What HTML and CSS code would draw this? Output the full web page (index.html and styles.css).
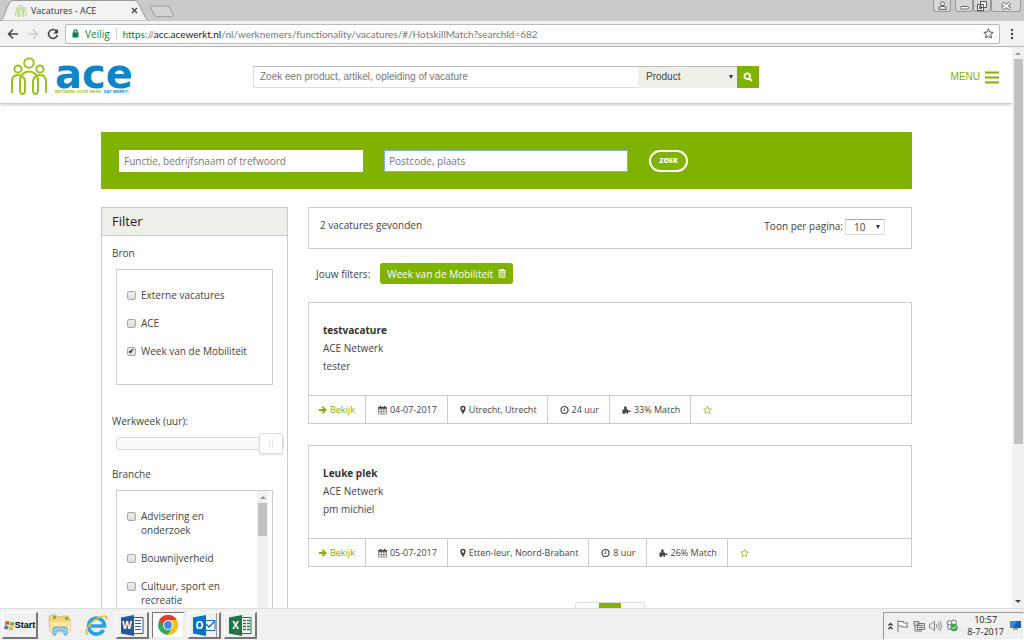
FILE: index.html
```html
<!DOCTYPE html>
<html lang="nl">
<head>
<meta charset="utf-8">
<title>Vacatures - ACE</title>
<link rel="stylesheet" href="styles.css">
</head>
<body>
<svg class="defs" aria-hidden="true">
  <symbol id="people" viewBox="0 0 38 38">
    <g fill="none" stroke="currentColor" stroke-width="2">
      <circle cx="19" cy="6" r="4.800"/><circle cx="8" cy="12" r="3.600"/><circle cx="30" cy="12" r="3.600"/>
      <path d="M2 36V25Q2 18 8 18Q14 18 15 24V33Q15 37 12.500 37T10 33V24C10 18 14 14.500 19 14.500S28 18 28 24V33Q28 37 25.500 37T23 33V24Q24 18 30 18Q36 18 36 25V36"/>
    </g>
  </symbol>
  <symbol id="star" viewBox="0 0 12 12"><path d="M6 1l1.500 3.400 3.600.4-2.700 2.400.8 3.600L6 9l-3.200 1.800.8-3.600L.9 4.800l3.600-.4z" fill="none" stroke="currentColor"/></symbol>
  <symbol id="arrow" viewBox="0 0 10 10"><path d="M1 5h7M5 1.500L8.500 5 5 8.500" fill="none" stroke="currentColor" stroke-width="2"/></symbol>
  <symbol id="calendar" viewBox="0 0 10 10"><path d="M.5 2h9v7.500h-9zM.5 4h9M3.500 4v5.500M6.500 4v5.500M.5 6.700h9" fill="none" stroke="currentColor" stroke-width=".6"/><path d="M.3 1.700h9.400v2H.3zM2 .3h1.500v2H2zM6.500.3H8v2H6.500z" fill="currentColor"/></symbol>
  <symbol id="pin" viewBox="0 0 6 10"><path fill-rule="evenodd" d="M3 .8A2.700 2.700 0 0 0 .3 3.500C.3 5 2 7 3 9.600 4 7 5.700 5 5.700 3.500A2.700 2.700 0 0 0 3 .8zm0 1.500a1.200 1.200 0 1 1 0 2.400 1.200 1.200 0 0 1 0-2.400z" fill="currentColor"/></symbol>
  <symbol id="clock" viewBox="0 0 10 10"><g fill="none" stroke="currentColor"><circle cx="5" cy="5" r="3.900" stroke-width="1.300"/><path d="M5.300 2.500v3H3.500" stroke-width=".9"/></g></symbol>
  <symbol id="puzzle" viewBox="0 0 10 10"><path d="M.5 4.500h2.200C2 2.500 2.300 1 3.700.8c1.600 0 1.800 1.700 1.300 3.700h1.700v1.300c1-.6 3-.5 3 .6s-2 1.200-3 .6v2.300H5c.3-2-1.800-2-1.500 0h-3z" fill="currentColor"/></symbol>
</svg>

<div class="tabs">
  <div class="tab">
    <svg class="tab-shape" viewBox="0 0 152 21" preserveAspectRatio="none"><path d="M0 21C5 20 7 1 13 .5h124c4 0 9 19 14 20.500z" fill="#f2f2f2" stroke="#999"/></svg>
    <svg class="favicon"><use href="#people"/></svg>
    <span class="tab-title">Vacatures - ACE</span>
    <button class="plain" aria-label="Tab sluiten"><svg width="7" height="7" viewBox="0 0 7 7"><path d="M1 1l5 5M6 1L1 6" stroke="#444" stroke-width="1.300"/></svg></button>
  </div>
  <button class="plain newtab" aria-label="Nieuw tabblad"><svg width="26" height="13" viewBox="0 0 26 13"><path d="M2 .5h17q2 0 3 3l3 7q0 1.500-2 1.500H7q-2 0-3-3L1 3Q0 .5 2 .5z" fill="#d3d3d3" stroke="#999"/></svg></button>
  <div class="wincontrols">
    <button aria-label="Profiel"><svg width="9" height="9" viewBox="0 0 9 9"><circle cx="4.500" cy="2.700" r="1.900" fill="#fff" stroke="#555"/><path d="M1 8.300V7q0-1.500 2-1.500h3q2 0 2 1.500v1.300z" fill="#fff" stroke="#555"/></svg></button>
    <div class="wingroup">
      <button aria-label="Minimaliseren"><svg width="9" height="9" viewBox="0 0 9 9"><rect x=".5" y="5.500" width="8" height="2.500" rx="1" fill="#fff" stroke="#666"/></svg></button>
      <button aria-label="Herstellen"><svg width="10" height="10" viewBox="0 0 10 10"><path d="M3.500.5h6v6h-6zM.5 3.500h6v6h-6z" fill="#fff" stroke="#555"/><path d="M2.500 5.500h2v2h-2z" fill="none" stroke="#555"/></svg></button>
      <button class="wide" aria-label="Sluiten"><svg width="10" height="8" viewBox="0 0 10 8"><path d="M1 1l8 6M9 1L1 7" stroke="#777" stroke-width="3.500"/><path d="M1.500 1.400l7 5.200M8.500 1.400l-7 5.200" stroke="#fff" stroke-width="1.800"/></svg></button>
    </div>
  </div>
</div>

<div class="toolbar">
  <button class="plain" aria-label="Terug"><svg width="12" height="12" viewBox="0 0 12 12"><path d="M11 6H1.500M6 1.500L1.500 6 6 10.500" fill="none" stroke="#444" stroke-width="1.500"/></svg></button>
  <button class="plain" aria-label="Vooruit"><svg width="12" height="12" viewBox="0 0 12 12"><path d="M1 6h9.500M6 1.500L10.500 6 6 10.500" fill="none" stroke="#ccc" stroke-width="1.300"/></svg></button>
  <button class="plain" aria-label="Vernieuwen"><svg width="12" height="12" viewBox="0 0 12 12"><path d="M9.800 3.500A4.500 4.500 0 1 0 10.400 7" fill="none" stroke="#444" stroke-width="1.500"/><path d="M11 .8v4.700H6.300z" fill="#444"/></svg></button>
  <div class="address">
    <svg width="7" height="9" viewBox="0 0 7 9"><path d="M.5 3.500h6v5h-6z" fill="#0b8043"/><path d="M2 4V2.300a1.500 1.500 0 0 1 3 0V4" fill="none" stroke="#0b8043" stroke-width="1.200"/></svg>
    <span class="secure">Veilig</span>
    <span class="url"><span class="secure">https</span>://<b>acc.acewerkt.nl</b>/nl/werknemers/functionality/vacatures/#/HotskillMatch?searchId=682</span>
    <svg class="bookmark"><use href="#star"/></svg>
  </div>
  <button class="plain" aria-label="Menu van browser"><svg width="4" height="12" viewBox="0 0 4 12"><g fill="#444"><circle cx="2" cy="2" r="1.200"/><circle cx="2" cy="6" r="1.200"/><circle cx="2" cy="10" r="1.200"/></g></svg></button>
</div>

<div class="viewport">
  <div class="page">
    <header class="site-header">
      <a class="logo" href="#">
        <svg class="logo-people"><use href="#people"/></svg>
        <span class="logo-words"><span class="logo-name">ace</span><span class="logo-line">NETWERK VOOR WERK, <em>DAT WERKT!</em></span></span>
      </a>
      <form class="site-search">
        <input type="text" aria-label="Zoeken" placeholder="Zoek een product, artikel, opleiding of vacature">
        <span class="select category"><select aria-label="Categorie"><option>Product</option></select></span>
        <button type="button" aria-label="Zoek"><svg width="10" height="10" viewBox="0 0 10 10"><circle cx="4.200" cy="4.200" r="2.800" fill="none" stroke="#fff" stroke-width="1.800"/><path d="M6.200 6.200L9 9" stroke="#fff" stroke-width="2"/></svg></button>
      </form>
      <a class="menu" href="#">MENU <svg width="14" height="13" viewBox="0 0 14 13"><path d="M0 1.500h14M0 6.500h14M0 11.500h14" stroke="#80b200" stroke-width="2"/></svg></a>
    </header>

    <main class="content">
      <form class="finder">
        <input type="text" aria-label="Functie" placeholder="Functie, bedrijfsnaam of trefwoord">
        <input class="focused" type="text" aria-label="Plaats" placeholder="Postcode, plaats">
        <button type="button">ZOEK</button>
      </form>

      <div class="columns">
        <aside class="filter">
          <h2>Filter</h2>
          <div class="filter-body">
            <h3>Bron</h3>
            <div class="box source">
              <label><input type="checkbox">Externe vacatures</label>
              <label><input type="checkbox">ACE</label>
              <label><input type="checkbox" checked>Week van de Mobiliteit</label>
            </div>
            <h3><label for="hours">Werkweek (uur):</label></h3>
            <input class="hours" id="hours" type="range" value="100">
            <h3>Branche</h3>
            <div class="box branch">
              <div class="branch-list">
                <label><input type="checkbox"><span>Advisering en onderzoek</span></label>
                <label><input type="checkbox">Bouwnijverheid</label>
                <label><input type="checkbox"><span>Cultuur, sport en recreatie</span></label>
              </div>
              <div class="scroll small"><span class="up"></span><span class="thumb"></span></div>
            </div>
          </div>
        </aside>

        <section class="results">
          <div class="summary">
            <span>2 vacatures gevonden</span>
            <label class="per-page">Toon per pagina: <span class="select count"><select><option>10</option></select></span></label>
          </div>
          <div class="active-filters">
            <span>Jouw filters:</span>
            <button type="button">Week van de Mobiliteit <svg width="8" height="9" viewBox="0 0 8 9"><path d="M0 1.500h8M2.500 1.300V.5h3v.8M1.200 2.500v5.800h5.600V2.500M3 3.500v4M5 3.500v4M1 3h6" fill="none" stroke="#fff" stroke-width=".9"/></svg></button>
          </div>

          <article class="card">
            <div class="card-body"><h4>testvacature</h4><p>ACE Netwerk</p><p>tester</p></div>
            <div class="card-foot">
              <a class="view" href="#"><svg class="i"><use href="#arrow"/></svg>Bekijk</a>
              <span><svg class="i"><use href="#calendar"/></svg>04-07-2017</span>
              <span><svg class="i narrow"><use href="#pin"/></svg>Utrecht, Utrecht</span>
              <span><svg class="i"><use href="#clock"/></svg>24 uur</span>
              <span><svg class="i"><use href="#puzzle"/></svg>33% Match</span>
              <a class="fav" href="#" aria-label="Bewaren"><svg class="i"><use href="#star"/></svg></a>
            </div>
          </article>

          <article class="card">
            <div class="card-body"><h4>Leuke plek</h4><p>ACE Netwerk</p><p>pm michiel</p></div>
            <div class="card-foot">
              <a class="view" href="#"><svg class="i"><use href="#arrow"/></svg>Bekijk</a>
              <span><svg class="i"><use href="#calendar"/></svg>05-07-2017</span>
              <span><svg class="i narrow"><use href="#pin"/></svg>Etten-leur, Noord-Brabant</span>
              <span><svg class="i"><use href="#clock"/></svg>8 uur</span>
              <span><svg class="i"><use href="#puzzle"/></svg>26% Match</span>
              <a class="fav" href="#" aria-label="Bewaren"><svg class="i"><use href="#star"/></svg></a>
            </div>
          </article>

          <nav class="pager"><span></span><span class="current"></span><span></span></nav>
        </section>
      </div>
    </main>
  </div>
  <div class="scroll"><span class="up"></span><span class="thumb"></span><span class="down"></span></div>
</div>

<footer class="taskbar">
  <button class="task start"><svg width="11" height="11" viewBox="0 0 11 11"><path d="M1.500 1.500Q3.500.5 5.500 1.500L4.700 5Q3 4 .8 5z" fill="#e8542a"/><path d="M6.200 1.800q2 1 4.300 0L9.800 5.300q-2 1-4.200 0z" fill="#7db832"/><path d="M.6 5.800Q2.600 5 4.500 6L3.700 9.500Q2 8.500 0 9.300z" fill="#3b82d0"/><path d="M5.300 6.300q2 1 4.300 0l-.8 3.500q-2 1-4.200 0z" fill="#f5b921"/></svg><span>Start</span></button>
  <button class="task flat" aria-label="Verkenner"><svg width="24" height="22" viewBox="0 0 24 22"><path d="M1 3l2-2h5l1 2h5l1-1h5l2 3v13H2z" fill="#f3d67a" stroke="#cda64a" stroke-width=".7"/><path d="M5 2h3v3H5zM17 3h3v3h-3z" fill="#77b255"/><path d="M2 8h20v10H2z" fill="#fae6a0"/><path d="M5 21v-6q0-2 2-2h10q2 0 2 2v6h-3v-4H8v4z" fill="#8fd0f0" stroke="#4a9ccc" stroke-width=".8"/></svg></button>
  <button class="task flat" aria-label="Internet Explorer"><svg width="23" height="23" viewBox="0 0 23 23"><path d="M18.500 16A8 8 0 1 1 19.500 12H6" fill="none" stroke="#2aa4e0" stroke-width="3.600"/><path d="M3 21C-2 18 5 8 12 4.500 18 1 23 1 21.500 6" fill="none" stroke="#edb52a" stroke-width="1.600"/></svg></button>
  <button class="task" aria-label="Word"><svg width="23" height="21" viewBox="0 0 23 21"><path d="M11 2.500h11v16H11z" fill="#fff" stroke="#2b579a"/><path d="M14 5.500h6M14 8.500h6M14 11.500h6M14 14.500h6" stroke="#2b579a"/><path d="M0 2.500L13 0v21L0 18.500z" fill="#2b579a"/><text x="6" y="14" text-anchor="middle" class="app">W</text></svg></button>
  <button class="task active" aria-label="Chrome"><svg width="22" height="22" viewBox="0 0 22 22"><circle cx="11" cy="11" r="10" fill="#34a853"/><path d="M11 11L2.300 6a10 10 0 0 1 17.400 0z" fill="#e33b2e"/><path d="M11 11V6h8.700A10 10 0 0 1 10.500 21l4.800-7.500z" fill="#fbc116"/><path d="M2.300 6L7 14l4-8z" fill="#e33b2e"/><circle cx="11" cy="11" r="5" fill="#fff"/><circle cx="11" cy="11" r="3.900" fill="#4285f4"/></svg></button>
  <button class="task double" aria-label="Outlook"><svg width="23" height="21" viewBox="0 0 23 21"><path d="M11 5.500h11v10H11z" fill="#fff" stroke="#0072c6"/><path d="M13 9l3 3 6-6" fill="none" stroke="#0072c6" stroke-width="1.500"/><path d="M0 2.500L13 0v21L0 18.500z" fill="#0072c6"/><text x="6.500" y="14" text-anchor="middle" class="app">O</text></svg></button>
  <button class="task" aria-label="Excel"><svg width="23" height="21" viewBox="0 0 23 21"><path d="M11 2.500h11v16H11z" fill="#fff" stroke="#217346"/><path d="M14 5.500h3M18 5.500h3M14 8.500h3M18 8.500h3M14 11.500h3M18 11.500h3M14 14.500h3M18 14.500h3" stroke="#217346" stroke-width="1.500"/><path d="M0 2.500L13 0v21L0 18.500z" fill="#217346"/><text x="6.500" y="14" text-anchor="middle" class="app">X</text></svg></button>
  <div class="tray">
    <svg width="5" height="8" viewBox="0 0 5 8"><path d="M.5 3.500l2-2 2 2M.5 7l2-2 2 2" fill="none" stroke="#222" stroke-width="1.200"/></svg>
    <svg width="12" height="12" viewBox="0 0 12 12"><path d="M1 0v12M1.500 1.500h5v1.500H11L9.500 5 11 7H5V6H1.500" fill="#fff" stroke="#777"/></svg>
    <svg width="12" height="12" viewBox="0 0 12 12"><path d="M1 1.500h5v4H1zM4.500 3.500h7v6h-7zM2 6v5h7" fill="#ddd" stroke="#777"/><path d="M6 5.500h4M6 7.500h4" stroke="#777"/></svg>
    <svg width="13" height="12" viewBox="0 0 13 12"><path d="M.5 4h2l3-3v10l-3-3h-2zM7 4q1.500 2 0 4M9 2.500q2.500 3.500 0 7M11 1q3 5 0 10" fill="none" stroke="#888"/></svg>
    <svg width="12" height="13" viewBox="0 0 12 13"><circle cx="3.500" cy="4" r="2.500" fill="#eee" stroke="#777"/><circle cx="8" cy="3.500" r="2.500" fill="#eee" stroke="#777"/><circle cx="4" cy="8" r="2.500" fill="#eee" stroke="#777"/><circle cx="8" cy="8.500" r="3.700" fill="#3fa650"/><path d="M6 8.500l1.500 1.500 2.500-3" fill="none" stroke="#fff"/></svg>
    <time>10:57<br>8-7-2017</time>
    <svg width="11" height="9" viewBox="0 0 11 9"><path d="M0 0h11v7H0z" fill="#1c5fb0"/><path d="M0 0h7L3 7H0z" fill="#3a86d8"/><path d="M3 8h5" stroke="#555"/></svg>
  </div>
</footer>
</body>
</html>
```
FILE: styles.css
```css
* { box-sizing: border-box; }
body {
  margin: 0;
  height: 100vh;
  display: flex;
  flex-direction: column;
  overflow: hidden;
  background: #fff;
  color: #444;
  font: 10px/14px "Open Sans", "Noto Sans", sans-serif;
}
button, input, select { font: inherit; color: inherit; margin: 0; padding: 0; border-radius: 0; }
a { color: #80b200; text-decoration: none; }
h2, h3, h4, p { margin: 0; font-size: inherit; font-weight: normal; }
svg { flex: none; display: block; }
.defs { position: absolute; width: 0; height: 0; }
.plain { border: 0; background: none; display: flex; }

/* browser tabs */
.tabs { display: flex; height: 21px; background: #cacaca; flex: none; }
.tab { position: relative; display: flex; align-items: center; width: 150px; padding: 0 12px 0 15px; font-size: 9px; line-height: 12px; color: #333; }
.tab-shape { position: absolute; left: 0; top: 0; width: 100%; height: 100%; }
.tab > :not(.tab-shape) { position: relative; }
.favicon { width: 12px; height: 12px; margin-right: 4px; color: #8cc63f; }
.tab-title { flex: 1; }
.newtab { margin-top: 5px; align-self: flex-start; }
.newtab svg { width: 24px; }
.wincontrols { margin-left: auto; display: flex; align-items: flex-start; gap: 4px; padding-right: 3px; }
.wincontrols button { width: 18px; height: 12px; display: flex; align-items: center; justify-content: center; border: 1px solid #999; border-top: 0; border-radius: 0 0 3px 3px; background: #d6d6d6; }
.wingroup { display: flex; }
.wingroup .wide { width: 30px; }

/* browser toolbar */
.toolbar { display: flex; align-items: center; gap: 8px; height: 26px; padding: 0 10px 0 7px; background: #f2f2f2; border-bottom: 1px solid #b5b5b5; flex: none; }
.address { flex: 1; display: flex; align-items: center; gap: 6px; height: 20px; padding: 0 5px 0 6px; margin: 0 2px 0 -2px; border: 1px solid #bbb; border-radius: 2px; background: #fff; color: #777; }
.secure { color: #0b8043; }
.url { flex: 1; padding-left: 6px; border-left: 1px solid #ccc; font: 10px/12px Lato, sans-serif; }
.url b { color: #222; font-weight: normal; }
.bookmark { width: 11px; height: 11px; color: #444; }

/* page area */
.viewport { flex: 1; min-height: 0; display: flex; }
.page { flex: 1; min-width: 0; overflow: hidden; }
.scroll { width: 12px; display: flex; flex-direction: column; align-items: center; background: #f1f1f1; }
.scroll .up { margin: 5px 0 4px; border: 3px solid transparent; border-top: 0; border-bottom-color: #999; }
.scroll .thumb { width: 9px; height: 385px; background: #c1c1c1; }
.scroll .down { margin: auto 0 5px; border: 3px solid transparent; border-bottom: 0; border-top-color: #444; }

.site-header { display: flex; align-items: center; height: 57px; padding: 3px 13px 0 10px; border-bottom: 1px solid #d0d0d0; box-shadow: 0 1px 3px #ccc; }
.logo { display: flex; gap: 7px; width: 243px; flex: none; padding-bottom: 2px; }
.logo-people { width: 38px; height: 38px; color: #9bc31c; }
.logo-words { display: flex; flex-direction: column; color: #0c86c8; padding-top: 2px; }
.logo-name { font: bold 40px/30px "DejaVu Sans", sans-serif; }
.logo-line { font: bold 4px/6px "Liberation Sans", sans-serif; color: #9bc31c; white-space: nowrap; }
.logo-line em { font-style: normal; color: #0c86c8; }
.site-search { display: flex; width: 506px; height: 22px; font: 10px/14px "Liberation Sans", Arial, sans-serif; }
.site-search input { flex: 1; min-width: 0; padding: 0 6px; border: 1px solid #ddd; border-top-color: #bbb; border-right: 0; }
.site-search button { width: 22px; border: 0; background: #80b200; display: flex; align-items: center; justify-content: center; }
.select { display: inline-grid; align-items: center; }
.select select { grid-area: 1 / 1; height: 100%; width: 100%; border: 0; background: none; appearance: none; }
.select::after { content: ""; grid-area: 1 / 1; justify-self: end; margin-right: 4px; border: 2px solid transparent; border-top: 4px solid #333; border-bottom: 0; pointer-events: none; }
.category { width: 99px; background: #eeefe9; border-top: 1px solid #bbb; }
.category select { padding-left: 8px; }
.menu { margin-left: auto; padding-top: 1px; display: flex; align-items: center; gap: 5px; font: 10px/14px "Liberation Sans", Arial, sans-serif; }
input::placeholder { color: #777; opacity: 1; }

.content { padding: 28px 100px 0 101px; }
.finder { display: flex; align-items: center; gap: 21px; height: 57px; padding: 0 18px; background: #80b200; }
.finder input { width: 244px; height: 22px; padding: 0 4px; border: 1px solid #fff; background: #fff; }
.finder .focused { border-color: #7cb4e0; }
.finder button { width: 39px; height: 22px; border: 2px solid #fff; border-radius: 11px; background: none; color: #fff; font-size: 7px; font-weight: 800; }

.columns { display: grid; grid-template-columns: 187px 1fr; gap: 20px; padding-top: 18px; }
.filter { border: 1px solid #ccc; }
.filter h2 { height: 28px; padding-left: 10px; background: #eeefe9; border-bottom: 1px solid #ccc; color: #222; font-size: 13px; line-height: 27px; }
.filter-body { padding: 10px 3px 0 14px; }
.filter h3 { margin-left: -4px; }
.box { width: 157px; border: 1px solid #ccc; }
.box label { display: flex; gap: 5px; }
.source { display: flex; flex-direction: column; gap: 14px; height: 116px; margin: 9px 0 29px; padding: 18px 10px; }
.box input { appearance: none; flex: none; width: 9px; height: 9px; margin-top: 3px; border: 1px solid #aaa; border-radius: 2px; background: linear-gradient(#eee, #ddd); }
.box input:checked::after { content: "✔"; display: block; color: #222; font: 8px/7px "DejaVu Sans", sans-serif; }
.hours { appearance: none; display: block; width: 168px; height: 21px; margin: 5px 0 13px; background: none; }
.hours::-webkit-slider-runnable-track { height: 13px; border: 1px solid #ddd; border-radius: 3px; background: #fafafa; }
.hours::-webkit-slider-thumb { appearance: none; width: 24px; height: 21px; margin-top: -5px; border: 1px solid #ddd; border-radius: 3px; background: linear-gradient(90deg, #e4e4e4 1px, #fff 1px 3px, #e4e4e4 3px) center / 4px 9px no-repeat #fff; box-shadow: 0 1px 2px #ddd; }
.branch { display: flex; height: 200px; margin-top: 9px; }
.branch-list { flex: 1; display: flex; flex-direction: column; gap: 14px; padding: 18px 30px 0 10px; }
.branch .scroll { width: 11px; margin-right: 4px; }
.small .thumb { height: 33px; }

.summary { display: flex; justify-content: space-between; height: 42px; padding: 10px 26px 0 11px; border: 1px solid #ccc; }
.per-page { display: flex; gap: 2px; padding-top: 1px; }
.count { width: 40px; height: 16px; border: 1px solid #ddd; border-top-color: #aaa; }
.count select { padding-left: 8px; }
.active-filters { display: flex; align-items: center; gap: 10px; padding: 14px 8px 18px; }
.active-filters button { display: flex; align-items: center; gap: 5px; height: 21px; padding: 0 7px; border: 0; border-radius: 3px; background: #80b200; color: #fff; font-weight: 500; }
.card { margin-bottom: 21px; border: 1px solid #ccc; }
.card-body { height: 92px; padding: 18px 14px; line-height: 18px; }
.card h4 { font-weight: bold; color: #333; }
.card-foot { display: flex; height: 28px; border-top: 1px solid #ccc; font-size: 9px; }
.card-foot > * { display: flex; align-items: center; gap: 3px; padding: 0 10px 0 12px; border-right: 1px solid #ccc; }
.card-foot .view { padding-left: 9px; }
.card-foot .fav { border-right: 0; }
.i { width: 9px; height: 10px; }
.narrow { width: 6px; }
.pager { display: flex; justify-content: center; width: 70px; height: 30px; margin: 35px auto 0; border: 1px solid #ddd; border-radius: 3px; }
.pager span { flex: 1; }
.pager .current { background: #80b200; }

/* taskbar */
.taskbar { display: flex; align-items: center; gap: 3px; height: 32px; padding: 2px 0 0 2px; background: #f0f0f0; border-top: 1px solid #ddd; flex: none; }
.task { display: flex; align-items: center; justify-content: center; width: 33px; height: 27px; border: 1px solid; border-color: #fff #777 #777 #fff; border-width: 1px 2px 2px 1px; background: #f0f0f0; }
.task.flat { border-color: transparent; }
.task.active { border-color: #777 #eee #eee #777; background: #fff; }
.task.double { box-shadow: inset -2px 0 #f0f0f0, inset -3px 0 #999; }
.start { width: 36px; margin-right: 3px; font: bold 9px/12px "Liberation Sans", Arial, sans-serif; color: #000; }
.app { fill: #fff; font: bold 10px "Open Sans", sans-serif; }
.tray { margin-left: auto; display: flex; align-items: center; gap: 4px; height: 28px; padding: 0 2px 0 4px; border: 1px solid #999; border-color: #999 #fff #fff #999; }
.tray time { padding: 0 2px 0 5px; text-align: center; color: #222; font: 9px/12px "Open Sans", sans-serif; }
```
